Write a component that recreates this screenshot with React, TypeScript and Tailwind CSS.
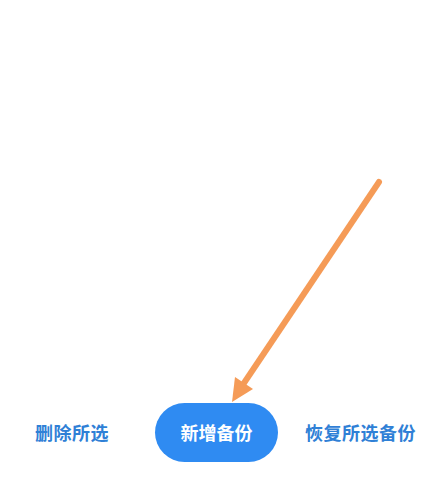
export default function App() {
  return (
    <div
      className="relative flex h-[478px] w-[443px] flex-col justify-end bg-white pb-[16px]"
      style={{ fontFamily: '"Noto Sans CJK SC", "Noto Sans", sans-serif' }}
    >
      {/* Arrow overlay pointing at the add button */}
      <svg
        className="pointer-events-none absolute left-0 top-0"
        width="443"
        height="478"
        viewBox="0 0 443 478"
      >
        <line
          x1="379"
          y1="182"
          x2="244"
          y2="383"
          stroke="#f59b57"
          strokeWidth="6"
          strokeLinecap="round"
        />
        <polygon points="232,402 253,389 235,377" fill="#f59b57" />
      </svg>

      <div className="flex items-center">
        <button className="ml-[35px] text-[18px] font-bold tracking-[0.5px] text-[#2f80d6]">
          删除所选
        </button>
        <button className="ml-[46px] flex h-[59px] w-[123px] items-center justify-center rounded-full bg-[#2f8bf2] text-[18px] font-bold text-white">
          新增备份
        </button>
        <button className="ml-[27px] text-[18px] font-bold tracking-[0.5px] text-[#2f80d6]">
          恢复所选备份
        </button>
      </div>
    </div>
  );
}
